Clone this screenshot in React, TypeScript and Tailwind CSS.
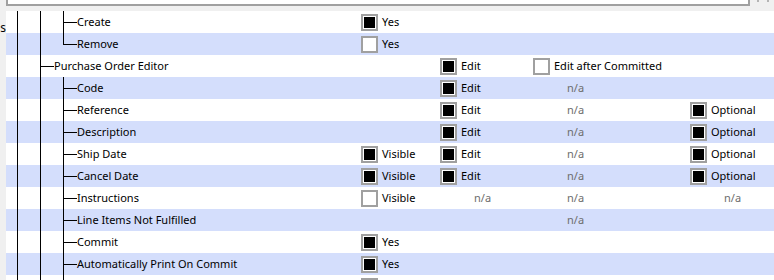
import React from 'react';

type Cell =
    | { kind: 'check'; checked: boolean; label: string }
    | { kind: 'na' }
    | null;

type Row = {
    label: string;
    level: 1 | 2;
    last?: boolean;
    a?: Cell;
    b?: Cell;
    c?: Cell;
    d?: Cell;
};

const yes = (checked: boolean, label = 'Yes'): Cell => ({ kind: 'check', checked, label });
const na: Cell = { kind: 'na' };

const rows: Row[] = [
    { label: 'Create', level: 2, a: yes(true) },
    { label: 'Remove', level: 2, last: true, a: yes(false) },
    { label: 'Purchase Order Editor', level: 1, b: yes(true, 'Edit'), c: yes(false, 'Edit after Committed') },
    { label: 'Code', level: 2, b: yes(true, 'Edit'), c: na },
    { label: 'Reference', level: 2, b: yes(true, 'Edit'), c: na, d: yes(true, 'Optional') },
    { label: 'Description', level: 2, b: yes(true, 'Edit'), c: na, d: yes(true, 'Optional') },
    { label: 'Ship Date', level: 2, a: yes(true, 'Visible'), b: yes(true, 'Edit'), c: na, d: yes(true, 'Optional') },
    { label: 'Cancel Date', level: 2, a: yes(true, 'Visible'), b: yes(true, 'Edit'), c: na, d: yes(true, 'Optional') },
    { label: 'Instructions', level: 2, a: yes(false, 'Visible'), b: na, c: na, d: na },
    { label: 'Line Items Not Fulfilled', level: 2, c: na },
    { label: 'Commit', level: 2, a: yes(true) },
    { label: 'Automatically Print On Commit', level: 2, a: yes(true) },
    { label: '', level: 2, a: yes(false, '') },
];

function CheckBox({ checked }: { checked: boolean }) {
    return (
        <div className="w-[17px] h-[17px] shrink-0 border-2 border-[#a0a0a0] bg-white p-px">
            {checked && <div className="w-full h-full bg-black" />}
        </div>
    );
}

function CellView({ cell }: { cell?: Cell }) {
    if (!cell) return null;
    if (cell.kind === 'na') {
        return <span className="block pl-[34px] pb-px text-[#6d6d6d]">n/a</span>;
    }
    return (
        <div className="flex items-center gap-[4px]">
            <CheckBox checked={cell.checked} />
            <span className="pb-px">{cell.label}</span>
        </div>
    );
}

function TreeLines({ level, last }: { level: 1 | 2; last?: boolean }) {
    const w = level === 2 ? 71 : 48;
    return (
        <svg width={w} height={22} className="shrink-0" shapeRendering="crispEdges">
            <line x1={11.5} y1={0} x2={11.5} y2={22} stroke="black" />
            <line x1={34.5} y1={0} x2={34.5} y2={22} stroke="black" />
            {level === 2 ? (
                <>
                    <line x1={57.5} y1={0} x2={57.5} y2={last ? 11.5 : 22} stroke="black" />
                    <line x1={57} y1={11.5} x2={71} y2={11.5} stroke="black" />
                </>
            ) : (
                <line x1={34} y1={11.5} x2={48} y2={11.5} stroke="black" />
            )}
        </svg>
    );
}

export default function App() {
    return (
        <div className="w-[774px] h-[280px] overflow-hidden bg-[#f0f0f0] text-[11px] text-black font-['Segoe_UI','Noto_Sans',sans-serif] leading-none">
            {/* Top: bottom of the filter box */}
            <div className="flex h-[11px]">
                <div className="ml-[6px] w-[744px] h-[6px] bg-white border-2 border-t-0 border-[#a0a0a0]" />
                <div className="flex gap-[8px] ml-[7px]">
                    <div className="w-[2px] h-[2px] bg-[#b4b4b4]" />
                    <div className="w-[2px] h-[2px] bg-[#b4b4b4]" />
                </div>
            </div>

            <div className="flex">
                {/* Cut-off label on the left */}
                <div className="w-[6px] shrink-0 overflow-hidden flex justify-end pt-[6px]">
                    <span className="leading-[22px] text-[12px]">s</span>
                </div>

                {/* Permission rows */}
                <div className="flex-1 flex flex-col">
                    {rows.map((row, i) => (
                        <div
                            key={i}
                            className={`flex h-[22px] items-center ${i % 2 === 1 ? 'bg-[#d4defc]' : 'bg-white'}`}
                        >
                            <div className="w-[355px] shrink-0 flex items-center h-full">
                                <TreeLines level={row.level} last={row.last} />
                                <span className="whitespace-nowrap pb-px">{row.label}</span>
                            </div>
                            <div className="w-[79px] shrink-0">
                                <CellView cell={row.a} />
                            </div>
                            <div className="w-[93px] shrink-0">
                                <CellView cell={row.b} />
                            </div>
                            <div className="w-[157px] shrink-0">
                                <CellView cell={row.c} />
                            </div>
                            <div className="flex-1">
                                <CellView cell={row.d} />
                            </div>
                        </div>
                    ))}
                </div>
            </div>
        </div>
    );
}
